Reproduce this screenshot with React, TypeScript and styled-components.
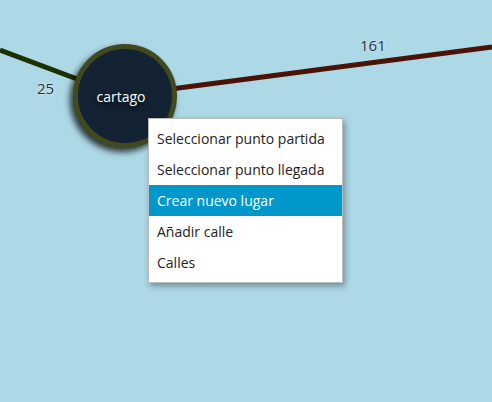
import React, { FC, useState } from 'react';
import styled, { createGlobalStyle } from 'styled-components';

const GlobalStyle = createGlobalStyle`
  html, body {
    margin: 0;
    padding: 0;
    background: #add8e6;
    font-family: 'Open Sans', 'Noto Sans', sans-serif;
  }
`;

interface Edge {
  from: [number, number];
  to: [number, number];
  color: string;
}

interface EdgeLabel {
  text: string;
  x: number;
  y: number;
}

const edges: Edge[] = [
  { from: [0, 50], to: [125, 97], color: '#1d3100' },
  { from: [125, 95], to: [492, 47], color: '#4b1206' },
];

const labels: EdgeLabel[] = [
  { text: '25', x: 37, y: 78 },
  { text: '161', x: 360, y: 35 },
];

const menuItems = [
  'Seleccionar punto partida',
  'Seleccionar punto llegada',
  'Crear nuevo lugar',
  'Añadir calle',
  'Calles',
];

const App: FC = () => {
  const [active, setActive] = useState(2);

  return (
    <>
      <GlobalStyle />
      <Canvas>
        <EdgeLayer width={492} height={402}>
          {edges.map((e, i) => (
            <line
              key={i}
              x1={e.from[0]}
              y1={e.from[1]}
              x2={e.to[0]}
              y2={e.to[1]}
              stroke={e.color}
              strokeWidth={5}
            />
          ))}
        </EdgeLayer>

        {labels.map((l) => (
          <Label key={l.text} style={{ left: l.x, top: l.y }}>
            {l.text}
          </Label>
        ))}

        <Node style={{ left: 73, top: 44 }}>cartago</Node>

        <Menu style={{ left: 148, top: 118 }}>
          {menuItems.map((item, i) => (
            <MenuItem key={item} $active={i === active} onMouseEnter={() => setActive(i)}>
              {item}
            </MenuItem>
          ))}
        </Menu>
      </Canvas>
    </>
  );
};

const Canvas = styled.div`
  position: relative;
  width: 492px;
  height: 402px;
  overflow: hidden;
  background: #add8e6;
`;

const EdgeLayer = styled.svg`
  position: absolute;
  left: 0;
  top: 0;
`;

const Label = styled.div`
  position: absolute;
  font-size: 15px;
  line-height: 20px;
  color: #2b3340;
  text-shadow: 0 0 3px #e8f4f8;
`;

const Node = styled.div`
  position: absolute;
  width: 94px;
  height: 94px;
  box-sizing: content-box;
  border: 5px solid #41491d;
  border-radius: 50%;
  background: #132334;
  box-shadow: -3px 4px 6px rgba(0, 0, 0, 0.75);
  display: flex;
  align-items: center;
  justify-content: center;
  padding-right: 0;
  color: #ffffff;
  font-size: 14px;
  text-indent: -8px;
  text-shadow: 0 3px 6px rgba(0, 0, 0, 0.9);
`;

const Menu = styled.ul`
  position: absolute;
  margin: 0;
  padding: 4px 0;
  list-style: none;
  width: 193px;
  background: #ffffff;
  border: 1px solid #bdbdbd;
  box-shadow: 2px 3px 6px rgba(0, 0, 0, 0.35);
`;

const MenuItem = styled.li<{ $active: boolean }>`
  height: 31px;
  line-height: 31px;
  padding: 0 8px;
  font-size: 14px;
  white-space: nowrap;
  cursor: default;
  color: ${(p) => (p.$active ? '#ffffff' : '#222222')};
  background: ${(p) => (p.$active ? '#0097cb' : 'transparent')};
`;

export default App;
